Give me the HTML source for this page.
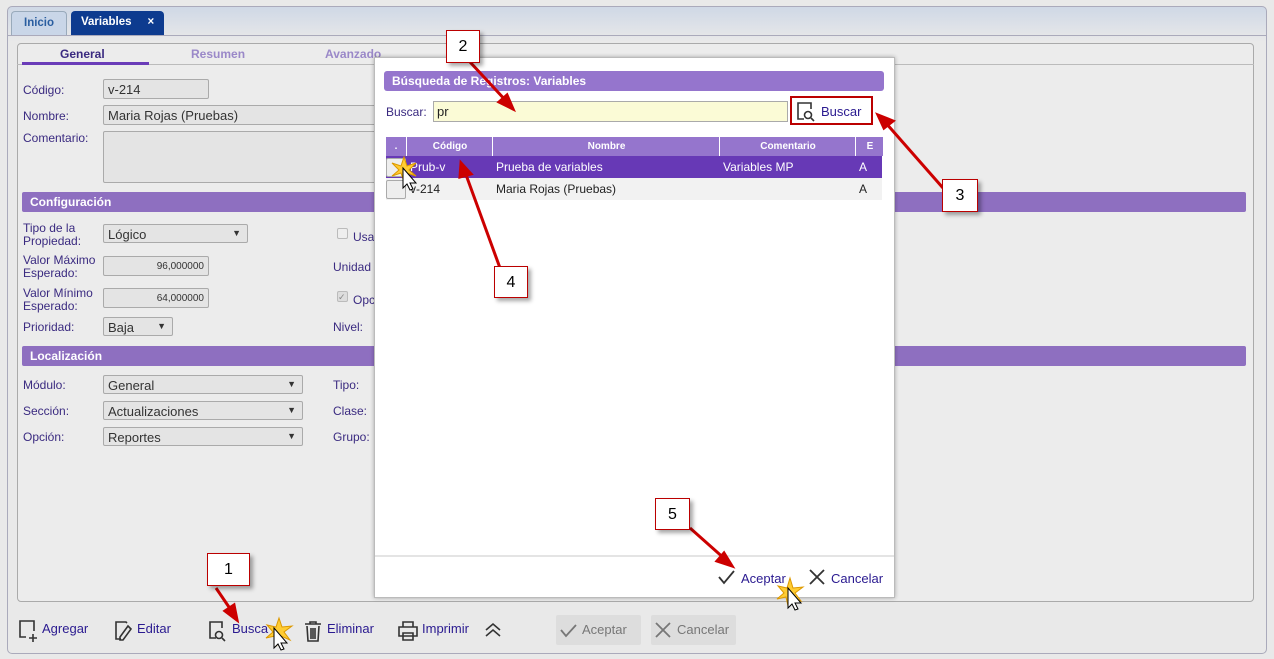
<!DOCTYPE html><html><head><meta charset="utf-8"><style>
*{box-sizing:border-box}body{margin:0;width:1274px;height:659px;background:#e9e9e9;font-family:"Liberation Sans",Verdana,sans-serif;font-size:12px;color:#3a2a80;position:relative;overflow:hidden}
.a{position:absolute}
.lbl{position:absolute;color:#3a2a80;font-size:12px;line-height:13px}
.inp{position:absolute;background:#e4e4e4;border:1px solid #aaa;border-radius:2px;font-size:13px;color:#333;padding:2px 4px}
.sel::after{content:"▼";position:absolute;right:6px;top:3px;font-size:9px;color:#333}
.bar{position:absolute;background:#8e6fc0;color:#fff;font-weight:bold;font-size:12px;padding:3px 8px;border-radius:2px}
.box{position:absolute;background:#fff;border:1px solid #b00;box-shadow:3px 3px 4px rgba(0,0,0,.35);font-size:16px;color:#000;text-align:center;line-height:32px}
.tb{position:absolute;top:621px;font-size:13px;color:#2a1a90}
</style></head><body>
<div class="a" style="left:7px;top:6px;width:1260px;height:648px;border:1px solid #aab;border-radius:5px;background:linear-gradient(#cfd8e6,#e9e9e9 35px)"></div>
<div class="a" style="left:11px;top:11px;width:56px;height:24px;border:1px solid #9ab;border-bottom:none;border-radius:4px 4px 0 0;background:#c9d6e8;color:#2a5ea0;font-weight:bold;font-size:11.5px;padding:5px 0 0 12px">Inicio</div>
<div class="a" style="left:71px;top:11px;width:93px;height:24px;border-radius:4px 4px 0 0;background:#0d3b8f;color:#fff;font-weight:bold;font-size:11.5px;padding:5px 0 0 10px">Variables&nbsp;&nbsp;&nbsp;&nbsp;&nbsp;×</div>
<div class="a" style="left:8px;top:35px;width:1258px;height:1px;background:#aab"></div>
<div class="a" style="left:17px;top:43px;width:1237px;height:559px;border:1px solid #aaa;border-radius:4px;background:#ececec"></div>
<div class="a" style="left:17px;top:64px;width:1237px;height:1px;background:#bbb"></div>
<div class="a" style="left:60px;top:47px;font-weight:bold;font-size:12px;color:#3a2a80">General</div>
<div class="a" style="left:22px;top:62px;width:127px;height:3px;background:#6a3cb8"></div>
<div class="a" style="left:191px;top:47px;font-weight:bold;color:#9a88c8">Resumen</div>
<div class="a" style="left:325px;top:47px;font-weight:bold;color:#9a88c8">Avanzado</div>
<div class="lbl" style="left:23px;top:84px">Código:</div><div class="inp" style="left:103px;top:79px;width:106px;height:20px">v-214</div>
<div class="lbl" style="left:23px;top:110px">Nombre:</div><div class="inp" style="left:103px;top:105px;width:280px;height:20px">Maria Rojas (Pruebas)</div>
<div class="lbl" style="left:23px;top:132px">Comentario:</div><div class="inp" style="left:103px;top:131px;width:280px;height:52px"></div>
<div class="bar" style="left:22px;top:192px;width:1224px;height:20px">Configuración</div>
<div class="lbl" style="left:23px;top:222px">Tipo de la<br>Propiedad:</div><div class="inp sel" style="left:103px;top:224px;width:145px;height:19px">Lógico</div>
<div class="lbl" style="left:23px;top:254px">Valor Máximo<br>Esperado:</div><div class="inp" style="left:103px;top:256px;width:106px;height:20px;text-align:right;font-size:10px;padding-top:4px">96,000000</div>
<div class="lbl" style="left:23px;top:287px">Valor Mínimo<br>Esperado:</div><div class="inp" style="left:103px;top:288px;width:106px;height:20px;text-align:right;font-size:10px;padding-top:4px">64,000000</div>
<div class="lbl" style="left:23px;top:321px">Prioridad:</div><div class="inp sel" style="left:103px;top:317px;width:70px;height:19px">Baja</div>
<div class="a" style="left:337px;top:228px;width:11px;height:11px;border:1px solid #bbb;border-radius:2px;background:#eee"></div><div class="lbl" style="left:353px;top:231px">Usa</div>
<div class="lbl" style="left:333px;top:261px">Unidad</div>
<div class="a" style="left:337px;top:291px;width:11px;height:11px;border:1px solid #bbb;border-radius:2px;background:#ddd;font-size:9px;color:#888;line-height:10px">✓</div><div class="lbl" style="left:353px;top:294px">Opc</div>
<div class="lbl" style="left:333px;top:321px">Nivel:</div>
<div class="bar" style="left:22px;top:346px;width:1224px;height:20px">Localización</div>
<div class="lbl" style="left:23px;top:379px">Módulo:</div><div class="inp sel" style="left:103px;top:375px;width:200px;height:19px">General</div>
<div class="lbl" style="left:23px;top:405px">Sección:</div><div class="inp sel" style="left:103px;top:401px;width:200px;height:19px">Actualizaciones</div>
<div class="lbl" style="left:23px;top:431px">Opción:</div><div class="inp sel" style="left:103px;top:427px;width:200px;height:19px">Reportes</div>
<div class="lbl" style="left:333px;top:379px">Tipo:</div><div class="lbl" style="left:333px;top:405px">Clase:</div><div class="lbl" style="left:333px;top:431px">Grupo:</div>
<!-- toolbar -->
<svg class="a" style="left:0;top:615px" width="520" height="30" fill="none" stroke="#333" stroke-width="1.6">
<path d="M26 22h-6v-16h14v10M33 19v8M29 23h8"/><path d="M121 24h-5v-17h10l1 1M128 11l-8 11v3h3l8-11z"/><path d="M216 23h-6v-16h12v6"/><circle cx="219" cy="20" r="3.5"/><path d="M222 23l3 3"/>
<path d="M305 9h16M310 9v-2h6v2M307 11l1 15h10l1-15M311 13v11M313 13v11M315 13v11"/><path d="M403 12v-5h10v5M399 12h18v9h-18zM403 18h10v7h-10z"/><path d="M486 15l7-6 7 6M486 21l7-6 7 6"/></svg>
<div class="tb" style="left:42px">Agregar</div><div class="tb" style="left:137px">Editar</div><div class="tb" style="left:232px">Busca</div><div class="tb" style="left:327px">Eliminar</div><div class="tb" style="left:422px">Imprimir</div>
<div class="a" style="left:556px;top:615px;width:85px;height:30px;background:#ddd;border-radius:2px;color:#777;font-size:13px;padding:7px 0 0 26px">Aceptar</div>
<div class="a" style="left:651px;top:615px;width:85px;height:30px;background:#ddd;border-radius:2px;color:#777;font-size:13px;padding:7px 0 0 26px">Cancelar</div>
<svg class="a" style="left:556px;top:615px" width="200" height="30" fill="none" stroke="#777" stroke-width="1.8"><path d="M5 15l5 6 10-11"/><path d="M100 8l14 14M114 8l-14 14"/></svg>
<!-- dialog -->
<div class="a" style="left:374px;top:57px;width:521px;height:541px;background:#fff;border:1px solid #bbb;box-shadow:0 0 4px rgba(0,0,0,.3)"></div>
<div class="a" style="left:384px;top:71px;width:500px;height:20px;background:#9575cd;border-radius:3px;color:#fff;font-weight:bold;font-size:12px;padding:3px 8px">Búsqueda de Registros: Variables</div>
<div class="lbl" style="left:386px;top:106px">Buscar:</div>
<div class="a" style="left:433px;top:101px;width:355px;height:21px;background:#fbfbd6;border:1px solid #aaa;font-size:13px;color:#222;padding:2px 3px">pr</div>
<div class="a" style="left:790px;top:96px;width:83px;height:29px;border:2px solid #b00;font-size:13px;color:#2a1a90;padding:6px 0 0 29px">Buscar</div>
<svg class="a" style="left:796px;top:101px" width="22" height="22" fill="none" stroke="#333" stroke-width="1.6"><path d="M8 18h-6v-16h13v6"/><circle cx="12" cy="14" r="3.5"/><path d="M15 17l3 3"/></svg>
<div class="a" style="left:386px;top:137px;width:497px;height:19px;background:#9575cd;color:#fff;font-weight:bold;font-size:10px;line-height:19px">
<span class="a" style="left:0;width:21px;text-align:center;border-right:1px solid #fff;height:19px">.</span><span class="a" style="left:22px;width:85px;text-align:center;border-right:1px solid #fff;height:19px">Código</span><span class="a" style="left:108px;width:226px;text-align:center;border-right:1px solid #fff;height:19px">Nombre</span><span class="a" style="left:335px;width:135px;text-align:center;border-right:1px solid #fff;height:19px">Comentario</span><span class="a" style="left:471px;width:26px;text-align:center">E</span></div>
<div class="a" style="left:386px;top:156px;width:496px;height:22px;background:#6739b6;color:#fff;font-size:12px;line-height:22px"><span class="a" style="left:24px">Prub-v</span><span class="a" style="left:110px">Prueba de variables</span><span class="a" style="left:337px">Variables MP</span><span class="a" style="left:473px">A</span></div>
<div class="a" style="left:386px;top:178px;width:496px;height:22px;background:#f2f2f2;color:#222;font-size:12px;line-height:22px"><span class="a" style="left:24px">v-214</span><span class="a" style="left:110px">Maria Rojas (Pruebas)</span><span class="a" style="left:473px">A</span></div>
<div class="a" style="left:386px;top:158px;width:20px;height:19px;border:1px solid #aaa;border-radius:2px;background:#eee"></div>
<div class="a" style="left:386px;top:180px;width:20px;height:19px;border:1px solid #aaa;border-radius:2px;background:#eee"></div>
<div class="a" style="left:375px;top:555px;width:519px;height:2px;background:#e4e4e4"></div>
<svg class="a" style="left:715px;top:567px" width="130" height="22" fill="none" stroke="#333" stroke-width="1.8"><path d="M4 10l5 6 10-12"/><path d="M95 3l14 14M109 3l-14 14"/></svg>
<div class="a" style="left:741px;top:571px;font-size:13px;color:#2a1a90">Aceptar</div><div class="a" style="left:831px;top:571px;font-size:13px;color:#2a1a90">Cancelar</div>
<!-- annotations -->
<svg class="a" style="left:0;top:0" width="1274" height="659"><g stroke="#c00" stroke-width="3" fill="#c00">
<line x1="470" y1="62" x2="508" y2="103"/><polygon points="513,109 499,102 507,95"/>
<line x1="943" y1="188" x2="885" y2="122"/><polygon points="878,115 893,121 884,128"/>
<line x1="500" y1="268" x2="465" y2="172"/><polygon points="461,163 471,174 460,177"/>
<line x1="690" y1="528" x2="726" y2="560"/><polygon points="732,566 717,561 724,553"/>
<line x1="216" y1="588" x2="233" y2="613"/><polygon points="237,620 225,611 234,605"/></g>
<g fill="#fc3" stroke="#d90"><polygon points="404,157 407,166 416,163 409,170 416,176 407,173 404,182 401,173 392,176 399,170 392,163 401,166"/><polygon points="279,618 282,627 292,626 284,632 290,640 281,636 277,645 275,636 266,638 273,632 267,625 276,627"/><polygon points="790,578 793,588 803,587 795,593 801,601 792,597 788,606 786,597 777,599 784,593 778,586 787,588"/></g>
<g fill="#fff" stroke="#000"><path d="M403 168v20l4-4 3 6 3-1-3-6h6z"/><path d="M274 628v20l4-4 3 6 3-1-3-6h6z"/><path d="M788 588v20l4-4 3 6 3-1-3-6h6z"/></g></svg>
<div class="box" style="left:446px;top:30px;width:34px;height:33px">2</div>
<div class="box" style="left:942px;top:179px;width:36px;height:33px">3</div>
<div class="box" style="left:494px;top:266px;width:34px;height:32px">4</div>
<div class="box" style="left:655px;top:498px;width:35px;height:32px">5</div>
<div class="box" style="left:207px;top:553px;width:43px;height:33px">1</div>
</body></html>
